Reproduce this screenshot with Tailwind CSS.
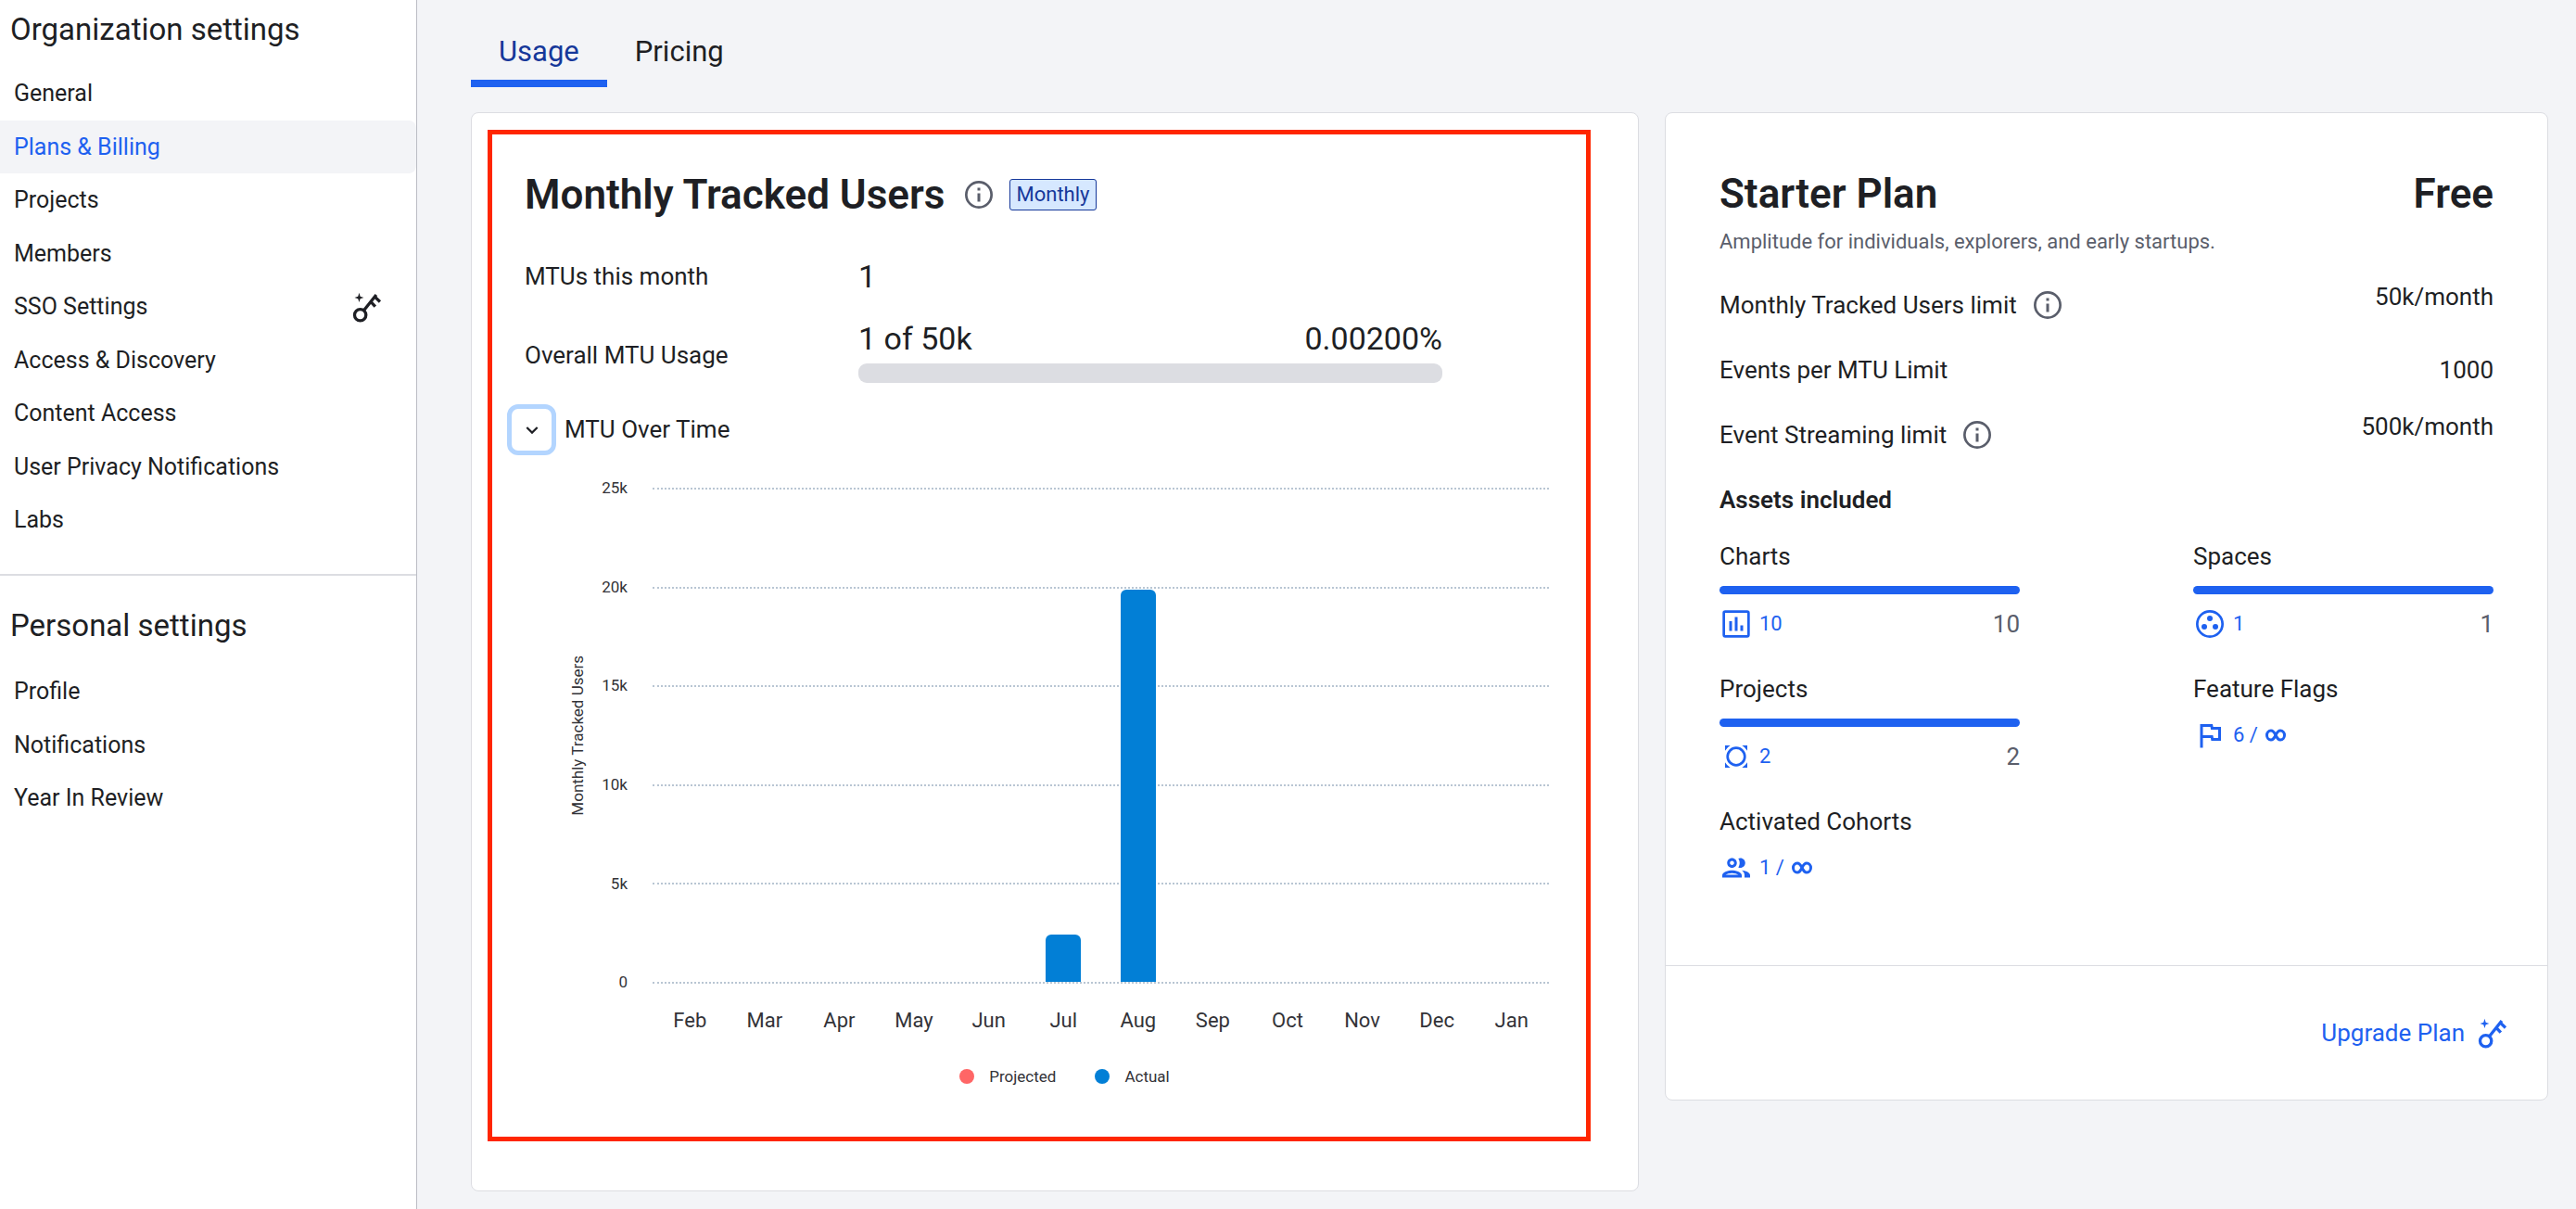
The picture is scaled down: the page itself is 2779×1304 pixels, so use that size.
<!DOCTYPE html>
<html lang="en">
<head>
<meta charset="utf-8">
<meta name="viewport" content="width=device-width, initial-scale=1">
<title>Plans &amp; Billing</title>
<script src="https://cdn.jsdelivr.net/npm/@tailwindcss/browser@4"></script>
</head>
<body class="flex min-h-screen bg-[#f3f4f7] font-['Roboto',sans-serif] text-[26px] text-[#1e1f24]">

<!-- Shared icon shapes -->
<svg class="hidden" aria-hidden="true">
  <symbol id="key" viewBox="0 0 24 24">
    <path fill="currentColor" d="M6.3 1.9 7.1 4.5 9.6 5.3 7.1 6.1 6.3 8.7 5.5 6.1 3 5.3 5.5 4.5z"/>
    <circle cx="7.1" cy="17.8" r="4.1" fill="none" stroke="currentColor" stroke-width="2.2"/>
    <path fill="none" stroke="currentColor" stroke-width="2.2" d="M9.7 14.5 18.6 3.3M17.4 4.6 21.3 8.3M14.6 8.2 17.9 11.7"/>
  </symbol>
  <symbol id="info" viewBox="0 0 24 24">
    <circle cx="12" cy="12" r="9.1" fill="none" stroke="currentColor" stroke-width="1.8"/>
    <path fill="currentColor" d="M11 7h2v2h-2zM11 11h2v6h-2z"/>
  </symbol>
  <symbol id="infinity" viewBox="0 0 22 14">
    <path fill="none" stroke="currentColor" stroke-width="3" d="M11 7C9.500 3.800 8 2 5.900 2A4.400 5 0 0 0 5.900 12C8 12 9.500 10.200 11 7S14 2 16.100 2A4.400 5 0 0 1 16.100 12C14 12 12.500 10.200 11 7z"/>
  </symbol>
</svg>

<aside class="flex w-[450px] shrink-0 flex-col border-r border-[#bbbdc4] bg-white pt-3">
  <h2 class="pl-[11px] text-[33px] leading-10">Organization settings</h2>
  <nav aria-label="Organization settings" class="mt-5 grid h-[518px] auto-rows-fr text-[25px]">
    <a href="#" class="flex items-center px-[15px]">General</a>
    <a href="#" aria-current="page" class="flex items-center rounded-r-lg bg-[#f3f4f7] px-[15px] text-[#1e61f0]">Plans &amp; Billing</a>
    <a href="#" class="flex items-center px-[15px]">Projects</a>
    <a href="#" class="flex items-center px-[15px]">Members</a>
    <a href="#" class="flex items-center justify-between pr-[35px] pl-[15px]">SSO Settings <svg class="size-9"><use href="#key"/></svg></a>
    <a href="#" class="flex items-center px-[15px]">Access &amp; Discovery</a>
    <a href="#" class="flex items-center px-[15px]">Content Access</a>
    <a href="#" class="flex items-center px-[15px]">User Privacy Notifications</a>
    <a href="#" class="flex items-center px-[15px]">Labs</a>
  </nav>
  <hr class="mt-[29px] border-t-2 border-[#dcdde2]">
  <h2 class="mt-[34px] pl-[11px] text-[33px] leading-10">Personal settings</h2>
  <nav aria-label="Personal settings" class="mt-[22px] grid h-[173px] auto-rows-fr text-[25px]">
    <a href="#" class="flex items-center px-[15px]">Profile</a>
    <a href="#" class="flex items-center px-[15px]">Notifications</a>
    <a href="#" class="flex items-center px-[15px]">Year In Review</a>
  </nav>
</aside>

<main class="min-w-0 flex-1 pr-[30px] pl-[58px]">
  <div role="tablist" class="flex text-[31px]">
    <button role="tab" aria-selected="true" class="flex h-[94px] items-center border-b-8 border-[#1e61f0] px-[30px] pt-[26px] text-[#16389a]">Usage</button>
    <button role="tab" aria-selected="false" class="flex h-[94px] items-center border-b-8 border-transparent px-[30px] pt-[26px]">Pricing</button>
  </div>

  <div class="mt-[27px] grid grid-cols-[1260fr_953fr] items-start gap-7">
    <section class="rounded-lg border border-[#dcdde2] bg-white pt-[18px] pr-[51px] pb-[53px] pl-[17px]">
      <div class="border-[5px] border-[#ff2600] pt-9 pb-[53px]">
        <div class="flex items-center pl-[35px] leading-[58px]">
          <h1 class="text-[44px] font-semibold">Monthly Tracked Users</h1>
          <button aria-label="About monthly tracked users" class="ml-[18px] text-[#5a5e6b]"><svg class="size-9"><use href="#info"/></svg></button>
          <span class="ml-[15px] rounded-[3px] border border-[#16389a] bg-[#d6e8ff] px-[7px] text-[22px] leading-8 text-[#16389a]">Monthly</span>
        </div>

        <dl class="mt-[29px] pl-[35px]">
          <div class="flex items-end">
            <dt class="w-[360px] leading-[60px]">MTUs this month</dt>
            <dd class="text-[34px] leading-[60px]">1</dd>
          </div>
          <div class="mt-[11px] flex items-end">
            <dt class="w-[360px] leading-[60px]">Overall MTU Usage</dt>
            <dd class="w-[630px]">
              <div class="flex justify-between text-[34px] leading-[53px]"><span>1 of 50k</span><span>0.00200%</span></div>
              <div role="progressbar" aria-label="Overall MTU usage" aria-valuenow="0" aria-valuemin="0" aria-valuemax="100" class="h-[21px] rounded-[9px] bg-[#dcdde2]"></div>
            </dd>
          </div>
        </dl>

        <div class="mt-[23px] flex items-center gap-[9px] pl-4">
          <button id="toggle" aria-expanded="true" aria-label="Collapse MTU over time" class="flex h-[55px] w-[53px] items-center justify-center rounded-xl border-[5px] border-[#b3d5ff]">
            <svg class="size-3.5" viewBox="0 0 16 16" fill="none" stroke="currentColor" stroke-width="2.5"><path d="M1.500 4.500 8 11l6.500-6.500"/></svg>
          </button>
          <span>MTU Over Time</span>
        </div>

        <figure class="mt-[35px] text-[#333338]">
          <div class="flex pr-10 pl-[82px]">
            <div class="flex h-[535px] w-[22px] items-center justify-center text-[17px]">
              <span class="rotate-180 whitespace-nowrap [writing-mode:vertical-rl]">Monthly Tracked Users</span>
            </div>
            <div class="flex h-[535px] w-[42px] flex-col items-end justify-between text-[17px]">
              <span class="flex h-0.5 items-center">25k</span>
              <span class="flex h-0.5 items-center">20k</span>
              <span class="flex h-0.5 items-center">15k</span>
              <span class="flex h-0.5 items-center">10k</span>
              <span class="flex h-0.5 items-center">5k</span>
              <span class="flex h-0.5 items-center">0</span>
            </div>
            <div class="ml-[27px] min-w-0 flex-1">
              <div class="relative h-[535px]">
                <div class="absolute inset-0 flex flex-col justify-between">
                  <div class="border-t-2 border-dotted border-[#b9c6d3]"></div>
                  <div class="border-t-2 border-dotted border-[#b9c6d3]"></div>
                  <div class="border-t-2 border-dotted border-[#b9c6d3]"></div>
                  <div class="border-t-2 border-dotted border-[#b9c6d3]"></div>
                  <div class="border-t-2 border-dotted border-[#b9c6d3]"></div>
                  <div class="border-t-2 border-dotted border-[#b9c6d3]"></div>
                </div>
                <div class="absolute inset-x-0 top-0 bottom-0.5 grid grid-cols-12 items-end justify-items-center">
                  <div class="col-start-6 w-[42px] bg-white px-0.5" style="height:9.6%"><div class="h-full rounded-t-md bg-[#027fd6]"></div></div>
                  <div class="col-start-7 w-[42px] bg-white px-0.5" style="height:79.4%"><div class="h-full rounded-t-md bg-[#027fd6]"></div></div>
                </div>
              </div>
              <div class="mt-5 grid grid-cols-12 text-center text-[22px] leading-10">
                <span>Feb</span><span>Mar</span><span>Apr</span><span>May</span><span>Jun</span><span>Jul</span><span>Aug</span><span>Sep</span><span>Oct</span><span>Nov</span><span>Dec</span><span>Jan</span>
              </div>
            </div>
          </div>
          <figcaption class="mt-7 flex justify-center gap-[42px] pl-[55px] text-[17px] leading-6">
            <span class="flex items-center gap-4"><i class="size-4 rounded-full bg-[#ff6666]"></i>Projected</span>
            <span class="flex items-center gap-4"><i class="size-4 rounded-full bg-[#027fd6]"></i>Actual</span>
          </figcaption>
        </figure>
      </div>
    </section>

    <section class="rounded-lg border border-[#dcdde2] bg-white">
      <div class="px-[58px] pt-[59px] pb-[87px]">
        <div class="flex justify-between text-[44px] leading-[56px] font-semibold"><h2>Starter Plan</h2><span>Free</span></div>
        <p class="mt-[9px] text-[22px] leading-[30px] text-[#5a5e6b]">Amplitude for individuals, explorers, and early startups.</p>
        <dl class="mt-[18px]">
          <div class="flex h-[70px] justify-between">
            <dt class="flex items-center gap-[15px]">Monthly Tracked Users limit <button aria-label="About monthly tracked users limit" class="text-[#5a5e6b]"><svg class="size-9"><use href="#info"/></svg></button></dt>
            <dd class="leading-[52px]">50k/month</dd>
          </div>
          <div class="flex h-[70px] items-center justify-between">
            <dt>Events per MTU Limit</dt>
            <dd>1000</dd>
          </div>
          <div class="flex h-[70px] justify-between">
            <dt class="flex items-center gap-[15px]">Event Streaming limit <button aria-label="About event streaming limit" class="text-[#5a5e6b]"><svg class="size-9"><use href="#info"/></svg></button></dt>
            <dd class="leading-[52px]">500k/month</dd>
          </div>
        </dl>
        <h3 class="leading-[70px] font-semibold">Assets included</h3>

        <div class="grid grid-cols-2 gap-x-[187px] gap-y-[26px]">
          <div>
            <h4 class="leading-[52px]">Charts</h4>
            <div role="progressbar" aria-label="Charts" aria-valuenow="10" aria-valuemax="10" class="mt-1.5 h-[9px] rounded-full bg-[#1e61f0]"></div>
            <div class="mt-3.5 flex items-center leading-9">
              <svg class="size-9 text-[#1e61f0]" viewBox="0 0 24 24"><rect x="3.100" y="3.100" width="17.800" height="17.800" rx="1" fill="none" stroke="currentColor" stroke-width="1.800"/><path fill="currentColor" d="M7 10h2v7H7zM11 7h2v10h-2zM15 13h2v4h-2z"/></svg>
              <a href="#" class="ml-[7px] text-[22px] text-[#1e61f0]">10</a>
              <span class="ml-auto text-[#5a5e6b]">10</span>
            </div>
          </div>
          <div>
            <h4 class="leading-[52px]">Spaces</h4>
            <div role="progressbar" aria-label="Spaces" aria-valuenow="1" aria-valuemax="1" class="mt-1.5 h-[9px] rounded-full bg-[#1e61f0]"></div>
            <div class="mt-3.5 flex items-center leading-9">
              <svg class="size-9 text-[#1e61f0]" viewBox="0 0 24 24" fill="currentColor"><circle cx="12" cy="12" r="9.100" fill="none" stroke="currentColor" stroke-width="1.800"/><circle cx="12" cy="8" r="2"/><circle cx="8" cy="14" r="2"/><circle cx="16" cy="14" r="2"/></svg>
              <a href="#" class="ml-[7px] text-[22px] text-[#1e61f0]">1</a>
              <span class="ml-auto text-[#5a5e6b]">1</span>
            </div>
          </div>
          <div>
            <h4 class="leading-[52px]">Projects</h4>
            <div role="progressbar" aria-label="Projects" aria-valuenow="2" aria-valuemax="2" class="mt-1.5 h-[9px] rounded-full bg-[#1e61f0]"></div>
            <div class="mt-3.5 flex items-center leading-9">
              <svg class="size-9 text-[#1e61f0]" viewBox="0 0 24 24"><circle cx="12" cy="12" r="6.200" fill="none" stroke="currentColor" stroke-width="1.800"/><path fill="currentColor" d="M4 4h3.800Q5.400 5.400 4 7.800zM20 4v3.800Q18.600 5.400 16.200 4zM4 20v-3.800Q5.400 18.600 7.800 20zM20 20h-3.800Q18.600 18.600 20 16.200z"/></svg>
              <a href="#" class="ml-[7px] text-[22px] text-[#1e61f0]">2</a>
              <span class="ml-auto text-[#5a5e6b]">2</span>
            </div>
          </div>
          <div>
            <h4 class="leading-[52px]">Feature Flags</h4>
            <a href="#" class="mt-1.5 flex items-center text-[22px] leading-9 text-[#1e61f0]">
              <svg class="size-9" viewBox="0 0 24 24" fill="currentColor"><path d="M12.360 6l.4 2H18v6h-3.360l-.4-2H7V6h5.360M14 4H5v17h2v-7h5.600l.4 2h7V6h-5.600L14 4z"/></svg>
              <span class="ml-[7px]">6 /</span>
              <svg class="ml-2 h-3.5 w-[22px]"><use href="#infinity"/></svg>
            </a>
          </div>
          <div>
            <h4 class="leading-[52px]">Activated Cohorts</h4>
            <a href="#" class="mt-1.5 flex items-center text-[22px] leading-9 text-[#1e61f0]">
              <svg class="size-9" viewBox="0 0 24 24" fill="currentColor"><path d="M9 13.750c-2.340 0-7 1.170-7 3.500V19h14v-1.750c0-2.330-4.660-3.500-7-3.500zM4.340 17c.84-.58 2.870-1.250 4.660-1.250s3.820.67 4.660 1.250H4.340zM9 12c1.930 0 3.500-1.570 3.500-3.500S10.930 5 9 5 5.500 6.570 5.500 8.500 7.070 12 9 12zm0-5c.83 0 1.500.67 1.500 1.500S9.830 10 9 10s-1.500-.67-1.500-1.500S8.170 7 9 7zm7.040 6.810c1.160.84 1.960 1.960 1.960 3.440V19h4v-1.750c0-2.020-3.500-3.170-5.960-3.440zM15 12c1.930 0 3.500-1.570 3.500-3.500S16.930 5 15 5c-.54 0-1.040.13-1.500.35.63.89 1 1.980 1 3.150s-.37 2.260-1 3.150c.46.22.96.35 1.500.35z"/></svg>
              <span class="ml-[7px]">1 /</span>
              <svg class="ml-2 h-3.5 w-[22px]"><use href="#infinity"/></svg>
            </a>
          </div>
        </div>
      </div>
      <div class="flex justify-end border-t border-[#dcdde2] py-[54px] pr-[41px]">
        <a href="#" class="flex items-center gap-3 leading-9 text-[#1e61f0]">Upgrade Plan <svg class="size-9"><use href="#key"/></svg></a>
      </div>
    </section>
  </div>
</main>
</body>
</html>
